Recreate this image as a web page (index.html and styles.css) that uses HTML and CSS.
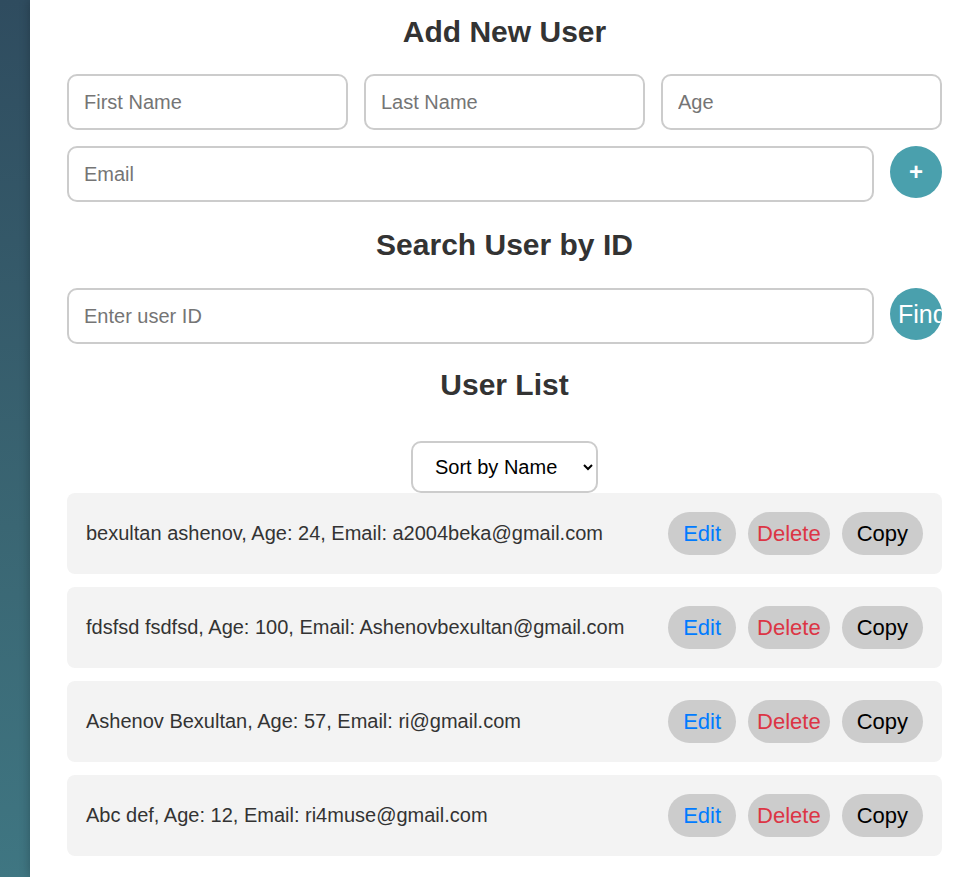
FILE: index.html
```html
<!DOCTYPE html>
<html lang="en">
<head>
<meta charset="utf-8">
<title>Users</title>
<link rel="stylesheet" href="styles.css">
</head>
<body>
<div class="side"></div>
<main class="panel">
  <h2 class="title title-add">Add New User</h2>
  <div class="row-three">
    <input class="field" type="text" placeholder="First Name">
    <input class="field" type="text" placeholder="Last Name">
    <input class="field" type="text" placeholder="Age">
  </div>
  <div class="row-action">
    <input class="field" type="email" placeholder="Email">
    <button class="round-btn plus">+</button>
  </div>
  <h2 class="title title-search">Search User by ID</h2>
  <div class="row-action">
    <input class="field" type="text" placeholder="Enter user ID">
    <button class="round-btn find">Find</button>
  </div>
  <h2 class="title title-list">User List</h2>
  <div class="sort-wrap">
    <select class="sort">
      <option>Sort by Name</option>
      <option>Sort by Age</option>
    </select>
  </div>
  <ul class="users">
    <li class="user">
      <span class="user-text">bexultan ashenov, Age: 24, Email: a2004beka@gmail.com</span>
      <div class="actions"><button class="act edit">Edit</button><button class="act delete">Delete</button><button class="act copy">Copy</button></div>
    </li>
    <li class="user">
      <span class="user-text">fdsfsd fsdfsd, Age: 100, Email: Ashenovbexultan@gmail.com</span>
      <div class="actions"><button class="act edit">Edit</button><button class="act delete">Delete</button><button class="act copy">Copy</button></div>
    </li>
    <li class="user">
      <span class="user-text">Ashenov Bexultan, Age: 57, Email: ri@gmail.com</span>
      <div class="actions"><button class="act edit">Edit</button><button class="act delete">Delete</button><button class="act copy">Copy</button></div>
    </li>
    <li class="user">
      <span class="user-text">Abc def, Age: 12, Email: ri4muse@gmail.com</span>
      <div class="actions"><button class="act edit">Edit</button><button class="act delete">Delete</button><button class="act copy">Copy</button></div>
    </li>
  </ul>
</main>
</body>
</html>
```

FILE: styles.css
```css
html, body {
  margin: 0;
  padding: 0;
}
body {
  display: flex;
  min-height: 100vh;
  font-family: "Liberation Sans", Arial, sans-serif;
  font-size: 20px;
  color: #333;
  background: #fff;
  overflow: hidden;
}
.side {
  width: 30px;
  flex: none;
  background: linear-gradient(to bottom, #2f4c5f 0%, #3a6673 60%, #3f7682 100%);
}
.panel {
  flex: 1;
  background: #fff;
  padding: 0 37px 20px;
  box-shadow: 0 0 10px rgba(0, 0, 0, 0.25);
  position: relative;
}
.title {
  margin: 0;
  font-size: 30px;
  line-height: 34px;
  font-weight: bold;
  text-align: center;
  color: #333;
}
.title-add { margin: 15px 0 25px; }
.title-search { margin: 26px 0 26px; }
.title-list { margin: 24px 0 39px; }
.row-three {
  display: grid;
  grid-template-columns: 1fr 1fr 1fr;
  gap: 16px;
  margin-bottom: 16px;
}
.row-action {
  display: flex;
  align-items: flex-start;
  gap: 16px;
}
.field {
  box-sizing: border-box;
  height: 56px;
  width: 100%;
  min-width: 0;
  flex: 1;
  border: 2px solid #ccc;
  border-radius: 10px;
  padding: 0 15px;
  font-family: "Liberation Sans", Arial, sans-serif;
  font-size: 20px;
  color: #333;
  background: #fff;
  outline: none;
}
.field::placeholder {
  color: #757575;
}
.round-btn {
  flex: none;
  width: 52px;
  height: 52px;
  border: none;
  border-radius: 50%;
  background: #4aa0ad;
  color: #fff;
  font-family: "Liberation Sans", Arial, sans-serif;
  font-size: 25px;
  padding: 0 8px;
  overflow: hidden;
  white-space: nowrap;
  text-align: left;
  cursor: pointer;
}
.round-btn.plus {
  text-align: center;
  font-weight: bold;
  font-size: 24px;
}
.sort-wrap {
  display: flex;
  justify-content: center;
}
.sort {
  box-sizing: border-box;
  width: 187px;
  height: 52px;
  border: 2px solid #ccc;
  border-radius: 10px;
  padding: 0 10px 0 18px;
  font-family: "Liberation Sans", Arial, sans-serif;
  font-size: 20px;
  color: #000;
  background: #fff;
}
.users {
  list-style: none;
  margin: 0;
  padding: 0;
  display: flex;
  flex-direction: column;
  gap: 13px;
}
.user {
  box-sizing: border-box;
  height: 81px;
  background: #f3f3f3;
  border-radius: 8px;
  display: flex;
  align-items: center;
  justify-content: space-between;
  padding: 0 19px;
}
.user-text {
  font-size: 20px;
  color: #333;
}
.actions {
  display: flex;
  gap: 12px;
}
.act {
  height: 43px;
  border: none;
  border-radius: 22px;
  background: #ccc;
  font-family: "Liberation Sans", Arial, sans-serif;
  font-size: 22px;
  padding: 0 15px;
  cursor: pointer;
}
.act.edit { color: #007bff; }
.act.delete { color: #dc3545; padding: 0 9px; }
.act.copy { color: #000; }
```
